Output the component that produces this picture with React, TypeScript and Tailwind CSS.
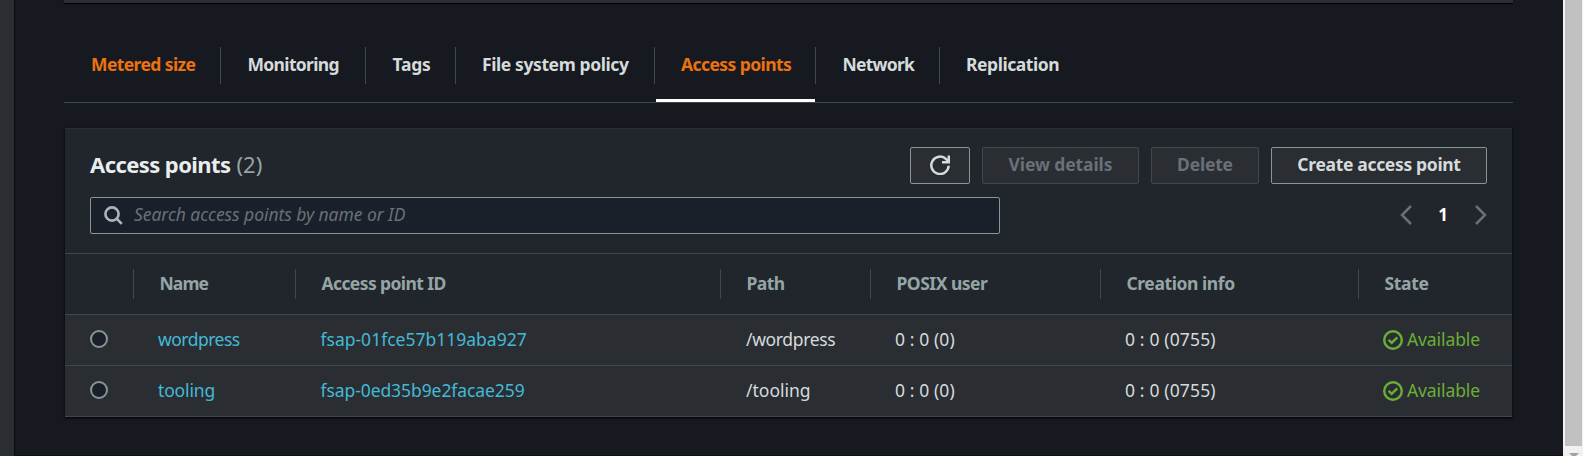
import React from 'react';

const tabs = [
  { label: 'Metered size', cell: 'w-[130px]', fit: 'pl-0 tracking-[-0.6px]', tone: 'text-[#ec7211]' },
  { label: 'Monitoring', cell: 'w-[145px]', fit: 'pl-[26.5px] tracking-[-0.66px]', tone: 'text-[#d5dbdb]' },
  { label: 'Tags', cell: 'w-[90px]', fit: 'pl-[26.5px] tracking-[-0.25px]', tone: 'text-[#d5dbdb]' },
  { label: 'File system policy', cell: 'w-[199px]', fit: 'pl-[26px] tracking-[-0.4px]', tone: 'text-[#d5dbdb]' },
  { label: 'Access points', cell: 'w-[161px]', fit: 'pl-[26px] tracking-[-0.58px]', tone: 'text-[#ec7211]', active: true },
  { label: 'Network', cell: 'w-[124px]', fit: 'pl-[26.5px] tracking-[-0.75px]', tone: 'text-[#d5dbdb]' },
  { label: 'Replication', cell: 'w-[148px]', fit: 'pl-[26px] tracking-[-0.45px]', tone: 'text-[#d5dbdb]', last: true },
];

const columns = [
  { label: 'Name', fit: 'tracking-[-0.9px]' },
  { label: 'Access point ID', fit: 'tracking-[-0.6px]' },
  { label: 'Path', fit: 'tracking-[-0.6px]' },
  { label: 'POSIX user', fit: 'tracking-[-0.5px]' },
  { label: 'Creation info', fit: 'tracking-[-0.42px]' },
  { label: 'State', fit: 'tracking-[-0.35px]' },
];

const rows = [
  { name: 'wordpress', nameFit: 'tracking-[-0.5px]', id: 'fsap-01fce57b119aba927', idFit: 'tracking-normal', path: '/wordpress', pathFit: 'tracking-[-0.35px]' },
  { name: 'tooling', nameFit: 'tracking-[-0.15px]', id: 'fsap-0ed35b9e2facae259', idFit: 'tracking-[-0.08px]', path: '/tooling', pathFit: 'tracking-normal' },
];

const grid = 'grid grid-cols-[69px_162px_425px_150px_230px_258px_153px]';

function Check() {
  return (
    <svg width="20" height="20" viewBox="0 0 20 20" fill="none" stroke="#6aaf35" strokeWidth="2.4" className="shrink-0">
      <circle cx="10" cy="10" r="8.8" />
      <path d="M5.6 9.8l3.1 3.1 5.6-5.5" />
    </svg>
  );
}

function Scrollbar() {
  return (
    <div className="flex h-[456px] w-5 shrink-0 flex-col items-center overflow-hidden bg-[#f1f1f1] pl-0.5 pr-px">
      <div className="h-[446px] w-full shrink-0 bg-[#c1c1c1]" />
      <svg width="10" height="5" viewBox="0 0 10 5" className="mt-[7px] shrink-0">
        <path d="M0 0h10L5 5z" fill="#a3a3a3" />
      </svg>
    </div>
  );
}

export default function App() {
  return (
    <div className="flex h-[456px] w-[1583px] overflow-hidden bg-[#16191f] font-['Noto_Sans',sans-serif] text-[17.5px] leading-6 text-[#d5dbdb]">
      <aside className="w-3.5 shrink-0 bg-[#2a2e33] shadow-[1px_0_1px_#0b0d10]" />
      <main className="flex flex-1 flex-col border-b border-[#140c14] pl-[50px]">
        <div className="h-[3px] w-[1449px] shrink-0 bg-[#2a2e33] shadow-[0_1px_1px_#000]" />
        <nav className="mt-11 flex h-14 w-[1449px] shrink-0 items-start border-b border-[#414750]">
          <div className="w-[27px] shrink-0" />
          {tabs.map((t) => (
            <div key={t.label} className={`${t.cell} relative h-[37px] shrink-0 pt-[5px] font-bold ${t.last ? '' : 'border-r border-[#414750]'}`}>
              <span className={`${t.fit} ${t.tone} block whitespace-nowrap`}>{t.label}</span>
              {t.active && <i className="absolute left-px top-[52px] h-[3px] w-[159px] bg-white" />}
            </div>
          ))}
        </nav>

        <section className="ml-px mt-[25px] w-[1447px] shrink-0 border-t border-[#2a2e33] bg-[#21252c] shadow-[0_1px_2px_#000]">
          <header className="flex h-[56px] items-start justify-between px-[25px] pt-[18px]">
            <h2 className="flex gap-[6px] text-[22px] leading-[34px]">
              <span className="font-bold tracking-[-0.58px] text-[#eaeded]">Access points</span>
              <span className="text-[#95a5a6]">(2)</span>
            </h2>
            <div className="flex gap-3 font-bold">
              <button className="flex h-[37px] w-[60px] items-center justify-center rounded-[2px] border border-[#879596] bg-[#2a2e33]">
                <svg width="20" height="20" viewBox="0 0 20 20" fill="none" stroke="#d5dbdb" strokeWidth="2.5" className="-mt-px">
                  <path d="M18.7 10.8A8.7 8.7 0 1 1 16.2 4.2L18 6" />
                  <path d="M18.8 0.5v6.7h-6.8" />
                </svg>
              </button>
              <button className="h-[37px] w-[157px] rounded-[2px] border border-[#414750] bg-[#2a2e33] pb-1 tracking-[-0.1px] text-[#687078]">View details</button>
              <button className="h-[37px] w-[108px] rounded-[2px] border border-[#414750] bg-[#2a2e33] pb-1 tracking-[-0.2px] text-[#687078]">Delete</button>
              <button className="h-[37px] w-[216px] rounded-[2px] border border-[#879596] bg-[#2a2e33] pb-1 tracking-[-0.33px]">Create access point</button>
            </div>
          </header>
          <div className="flex h-[68px] items-start justify-between px-[25px] pt-3">
            <div className="flex h-[37px] w-[910px] items-center rounded-[2px] border border-[#879596] bg-[#1a2029] pl-[13px]">
              <svg width="19" height="19" viewBox="0 0 19 19" fill="none" stroke="#aab7b8" strokeWidth="2.6">
                <circle cx="8" cy="8" r="6.6" />
                <path d="M12.6 12.6l5.2 5.2" />
              </svg>
              <span className="ml-[11px] pb-1 italic tracking-[-0.06px] text-[#687078]">Search access points by name or ID</span>
            </div>
            <div className="flex h-[37px] items-center pb-px">
              <svg width="12" height="20" viewBox="0 0 12 20" fill="none" stroke="#687078" strokeWidth="2.5">
                <path d="M11 1L2 10l9 9" />
              </svg>
              <span className="w-[62px] text-center text-[17px] font-bold text-white">1</span>
              <svg width="12" height="20" viewBox="0 0 12 20" fill="none" stroke="#687078" strokeWidth="2.5" className="ml-px">
                <path d="M1 1l9 9-9 9" />
              </svg>
            </div>
          </div>

          <div className={`${grid} h-[62px] border-y border-[#414750] pt-[15px] font-bold text-[#95a5a6]`}>
            <div className="h-[30px] border-r border-[#414750]" />
            {columns.map((c, i) => (
              <div key={c.label} className={`${c.fit} h-[30px] whitespace-nowrap pl-[25.5px] pt-[2px] ${i < 5 ? 'border-r border-[#414750]' : ''}`}>{c.label}</div>
            ))}
          </div>
          {rows.map((r) => (
            <div key={r.name} className={`${grid} h-[51px] items-center whitespace-nowrap border-b border-[#414750] bg-[#2a2e33]`}>
              <div className="pb-[3px] pl-[25px]">
                <div className="size-[18px] rounded-full border-2 border-[#879596] bg-[#1a2029]" />
              </div>
              <div className={`${r.nameFit} pb-0.5 pl-6 text-[#44b9d6]`}>{r.name}</div>
              <div className={`${r.idFit} pb-0.5 pl-[24.5px] text-[#44b9d6]`}>{r.id}</div>
              <div className={`${r.pathFit} pb-0.5 pl-[25px]`}>{r.path}</div>
              <div className="pb-0.5 pl-6 tracking-[0.1px]">0 : 0 (0)</div>
              <div className="pb-0.5 pl-6 tracking-[0.15px]">0 : 0 (0755)</div>
              <div className="flex items-center gap-1 pl-6 tracking-[-0.1px] text-[#6aaf35]">
                <Check />
                <span className="pb-0.5">Available</span>
              </div>
            </div>
          ))}
        </section>
      </main>
      <Scrollbar />
    </div>
  );
}
